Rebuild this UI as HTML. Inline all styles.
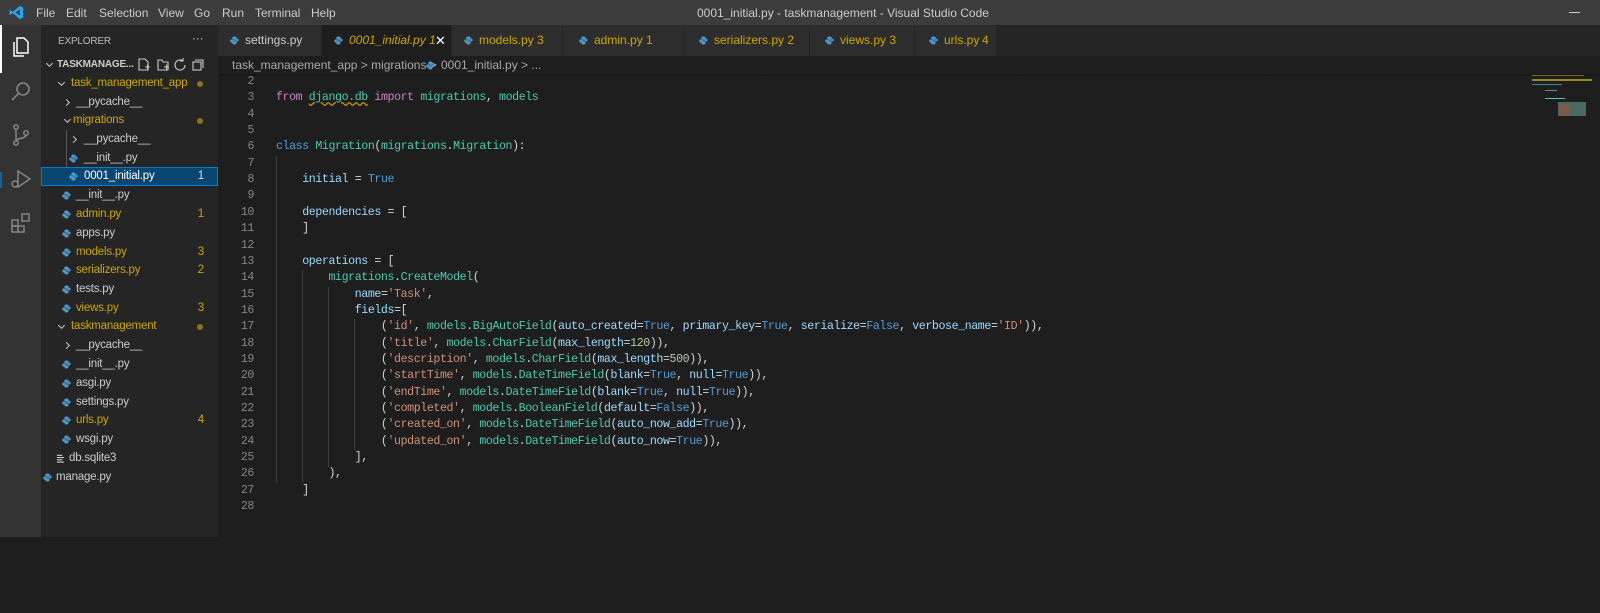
<!DOCTYPE html>
<html><head><meta charset="utf-8"><style>
*{margin:0;padding:0;box-sizing:border-box}
body{width:1600px;height:537px;background:#1e1e1e;overflow:hidden;position:relative;font-family:"Liberation Sans",sans-serif;color:#ccc}
.abs{position:absolute}
#title{left:0;top:0;width:1600px;height:25px;background:#3c3c3c;font-size:12px;color:#ccc}
#title span{position:absolute;top:6px}
#act{left:0;top:25px;width:41px;height:512px;background:#333}
#side{left:41px;top:25px;width:177px;height:512px;background:#252526;font-size:11.5px;letter-spacing:-0.2px}
.row{position:absolute;left:0;width:177px;height:19px;line-height:19px;white-space:nowrap}
.y{color:#cca700}
.w{color:#ccc}
.py{position:absolute;top:5px;width:9px;height:9px}
.chev{position:absolute;top:5px;width:9px;height:9px}
.dot{position:absolute;right:15px;top:7px;width:6px;height:6px;border-radius:3px;background:#8a7424}
.num{position:absolute;right:14px}
#tabs{left:218px;top:25px;width:1382px;height:31px;background:#252526}
.tab{position:absolute;top:0;height:31px;background:#2d2d2d;border-right:1px solid #252526;font-size:12px;line-height:31px;color:#cca700;white-space:nowrap;overflow:hidden}
#bc{left:218px;top:56px;width:1382px;height:18px;background:#1e1e1e;font-size:12px;color:#a9a9a9;line-height:18px;white-space:nowrap}
#code{left:218px;top:74px;font-family:"Liberation Mono",monospace;font-size:11.6px;letter-spacing:-0.4px;line-height:16.35px;white-space:pre;color:#d4d4d4}
.ln{position:absolute;left:0;width:36px;text-align:right;color:#858585}
.cl{position:absolute;left:58px}
.k{color:#c586c0}.b{color:#569cd6}.g{color:#4ec9b0}.v{color:#9cdcfe}.s{color:#ce9178}.n{color:#b5cea8}.f{color:#dcdcaa}
.guide{position:absolute;width:1px;background:#404040}
</style></head><body>
<svg width="0" height="0" style="position:absolute"><defs>
<symbol id="down" viewBox="0 0 10 10"><path d="M1.5 3.5 L5 7 L8.5 3.5" fill="none" stroke="#ccc" stroke-width="1.1"/></symbol>
<symbol id="right" viewBox="0 0 10 10"><path d="M3.5 1.5 L7 5 L3.5 8.5" fill="none" stroke="#ccc" stroke-width="1.1"/></symbol>
<symbol id="pyi" viewBox="0 0 10 10"><path d="M5 .5C3 .5 2.6 1.3 2.6 2.2V3.4H5.2V3.8H1.8C.9 3.8.3 4.5.3 5.5S.9 7.4 1.8 7.4H2.6V6.2C2.6 5.3 3.3 4.8 4.1 4.8H6C6.8 4.8 7.4 4.2 7.4 3.4V2.2C7.4 1.2 6.6.5 5 .5Z M4.8 9.5C6.8 9.5 7.2 8.7 7.2 7.8V6.6H4.6V6.2H8C8.9 6.2 9.6 5.5 9.6 4.5S8.9 2.6 8 2.6H7.6V3.8C7.6 4.7 6.9 5.2 6.1 5.2H4C3.2 5.2 2.6 5.8 2.6 6.6V7.8C2.6 8.8 3.2 9.5 4.8 9.5Z" fill="#4c9bd0"/></symbol>
</defs></svg>
<div id="title" class="abs">
<svg class="abs" style="left:9px;top:5px" width="15" height="15" viewBox="0 0 16 16"><path d="M11.5 1 L15 2.6 V13.4 L11.5 15 L4 8.7 L1.6 10.5 L0.5 10 V6 L1.6 5.5 L4 7.3 Z M11.5 4.5 L7 8 L11.5 11.5 Z" fill="#23a9f2"/></svg>
<span style="left:36px">File</span><span style="left:66px">Edit</span><span style="left:99px">Selection</span><span style="left:158px">View</span><span style="left:194px">Go</span><span style="left:222px">Run</span><span style="left:255px">Terminal</span><span style="left:311px">Help</span>
<span style="left:697px">0001_initial.py - taskmanagement - Visual Studio Code</span>
<div class="abs" style="left:1569px;top:12px;width:11px;height:1px;background:#ccc"></div>
</div>
<div id="act" class="abs">
<div class="abs" style="left:0;top:0;width:2px;height:48px;background:#fff"></div>
<svg class="abs" style="left:9px;top:10px" width="24" height="24" viewBox="0 0 24 24" fill="none" stroke="#fff" stroke-width="1.5"><path d="M8 3h7l4 4v11h-11z"/><path d="M5 7v14h10"/></svg>
<svg class="abs" style="left:9px;top:55px" width="24" height="24" viewBox="0 0 24 24" fill="none" stroke="#858585" stroke-width="1.6"><circle cx="14" cy="9" r="6"/><path d="M10 13l-7 7"/></svg>
<svg class="abs" style="left:9px;top:98px" width="24" height="24" viewBox="0 0 24 24" fill="none" stroke="#858585" stroke-width="1.5"><circle cx="7" cy="4" r="2.2"/><circle cx="7" cy="20" r="2.2"/><circle cx="17" cy="10" r="2.2"/><path d="M7 6v12M17 12c0 4-10 3-10 6"/></svg>
<svg class="abs" style="left:9px;top:142px" width="24" height="24" viewBox="0 0 24 24" fill="none" stroke="#858585" stroke-width="1.5"><path d="M9 4l12 8-12 8z"/><circle cx="6" cy="17" r="3"/></svg>
<svg class="abs" style="left:9px;top:186px" width="24" height="24" viewBox="0 0 24 24" fill="none" stroke="#858585" stroke-width="1.5"><rect x="3" y="9" width="6" height="6"/><rect x="3" y="15" width="6" height="6"/><rect x="9" y="15" width="6" height="6"/><rect x="13" y="3" width="7" height="7"/></svg>
</div>
<div id="side" class="abs">
<div class="abs" style="left:17px;top:11px;font-size:10px;color:#bbb">EXPLORER</div>
<div class="abs" style="left:151px;top:6px;font-size:12px;color:#ccc">···</div>
<div class="row" style="top:30px;font-weight:bold;font-size:10px"><svg class="chev" style="left:4px"><use href="#down"/></svg><span style="position:absolute;left:16px">TASKMANAGE...</span>
<svg class="abs" style="left:96px;top:3px" width="70" height="14" viewBox="0 0 70 14" fill="none" stroke="#ccc" stroke-width="1.1"><path d="M2 1h6l3 3v8H2z M8 9h5M10.5 6.5v5"/><path d="M21 2h4l1 2h5v8H21z M27 9h5M29.5 6.5v5"/><path d="M46 3a5 5 0 1 0 2 4M46 0v3h-3"/><rect x="56" y="4" width="8" height="8"/><path d="M58 2h8v8"/></svg></div>
<div class="row y" style="top:49px"><svg class="chev" style="left:16px"><use href="#down"/></svg><span style="position:absolute;left:30px">task_management_app</span><div class="dot"></div></div>
<div class="row w" style="top:68px"><svg class="chev" style="left:22px"><use href="#right"/></svg><span style="position:absolute;left:35px">__pycache__</span></div>
<div class="row y" style="top:86px"><svg class="chev" style="left:22px"><use href="#down"/></svg><span style="position:absolute;left:32px">migrations</span><div class="dot"></div></div>
<div class="abs" style="left:25px;top:105px;width:1px;height:56px;background:#585858"></div>
<div class="row w" style="top:105px"><svg class="chev" style="left:29px"><use href="#right"/></svg><span style="position:absolute;left:43px">__pycache__</span></div>
<div class="row w" style="top:124px"><svg class="py" style="left:28px"><use href="#pyi"/></svg><span style="position:absolute;left:43px">__init__.py</span></div>
<div class="row" style="top:142px;background:#094771;outline:1px solid #007fd4;outline-offset:-1px;color:#fff"><svg class="py" style="left:28px"><use href="#pyi"/></svg><span style="position:absolute;left:43px">0001_initial.py</span><span class="num" style="color:#ddd">1</span></div>
<div class="row w" style="top:161px"><svg class="py" style="left:21px"><use href="#pyi"/></svg><span style="position:absolute;left:35px">__init__.py</span></div>
<div class="row y" style="top:180px"><svg class="py" style="left:21px"><use href="#pyi"/></svg><span style="position:absolute;left:35px">admin.py</span><span class="num">1</span></div>
<div class="row w" style="top:199px"><svg class="py" style="left:21px"><use href="#pyi"/></svg><span style="position:absolute;left:35px">apps.py</span></div>
<div class="row y" style="top:218px"><svg class="py" style="left:21px"><use href="#pyi"/></svg><span style="position:absolute;left:35px">models.py</span><span class="num">3</span></div>
<div class="row y" style="top:236px"><svg class="py" style="left:21px"><use href="#pyi"/></svg><span style="position:absolute;left:35px">serializers.py</span><span class="num">2</span></div>
<div class="row w" style="top:255px"><svg class="py" style="left:21px"><use href="#pyi"/></svg><span style="position:absolute;left:35px">tests.py</span></div>
<div class="row y" style="top:274px"><svg class="py" style="left:21px"><use href="#pyi"/></svg><span style="position:absolute;left:35px">views.py</span><span class="num">3</span></div>
<div class="row y" style="top:292px"><svg class="chev" style="left:16px"><use href="#down"/></svg><span style="position:absolute;left:30px">taskmanagement</span><div class="dot"></div></div>
<div class="row w" style="top:311px"><svg class="chev" style="left:22px"><use href="#right"/></svg><span style="position:absolute;left:35px">__pycache__</span></div>
<div class="row w" style="top:330px"><svg class="py" style="left:21px"><use href="#pyi"/></svg><span style="position:absolute;left:35px">__init__.py</span></div>
<div class="row w" style="top:349px"><svg class="py" style="left:21px"><use href="#pyi"/></svg><span style="position:absolute;left:35px">asgi.py</span></div>
<div class="row w" style="top:368px"><svg class="py" style="left:21px"><use href="#pyi"/></svg><span style="position:absolute;left:35px">settings.py</span></div>
<div class="row y" style="top:386px"><svg class="py" style="left:21px"><use href="#pyi"/></svg><span style="position:absolute;left:35px">urls.py</span><span class="num">4</span></div>
<div class="row w" style="top:405px"><svg class="py" style="left:21px"><use href="#pyi"/></svg><span style="position:absolute;left:35px">wsgi.py</span></div>
<div class="row w" style="top:424px"><svg class="py" style="left:15px" viewBox="0 0 10 10"><path d="M1 1.5h6M1 4h8M1 6.5h6M1 9h8" stroke="#ccc" stroke-width="1.2"/></svg><span style="position:absolute;left:28px">db.sqlite3</span></div>
<div class="row w" style="top:443px"><svg class="py" style="left:2px"><use href="#pyi"/></svg><span style="position:absolute;left:15px">manage.py</span></div>
</div>
<div id="tabs" class="abs">
<div class="tab" style="left:0;width:104px;color:#ccc"><svg class="abs" style="left:12px;top:11px" width="9" height="9"><use href="#pyi"/></svg><span class="abs" style="left:27px">settings.py</span></div>
<div class="tab" style="left:104px;width:130px;background:#1e1e1e"><svg class="abs" style="left:12px;top:11px" width="9" height="9"><use href="#pyi"/></svg><span class="abs" style="left:27px;font-style:italic">0001_initial.py 1</span><span class="abs" style="left:113px;color:#fff;font-size:13px">✕</span></div>
<div class="tab" style="left:234px;width:111px"><svg class="abs" style="left:12px;top:11px" width="9" height="9"><use href="#pyi"/></svg><span class="abs" style="left:27px">models.py 3</span></div>
<div class="tab" style="left:345px;width:121px"><svg class="abs" style="left:16px;top:11px" width="9" height="9"><use href="#pyi"/></svg><span class="abs" style="left:31px">admin.py 1</span></div>
<div class="tab" style="left:466px;width:126px"><svg class="abs" style="left:15px;top:11px" width="9" height="9"><use href="#pyi"/></svg><span class="abs" style="left:30px">serializers.py 2</span></div>
<div class="tab" style="left:592px;width:105px"><svg class="abs" style="left:15px;top:11px" width="9" height="9"><use href="#pyi"/></svg><span class="abs" style="left:30px">views.py 3</span></div>
<div class="tab" style="left:697px;width:82px"><svg class="abs" style="left:14px;top:11px" width="9" height="9"><use href="#pyi"/></svg><span class="abs" style="left:29px">urls.py</span><span class="abs" style="left:67px">4</span></div>
</div>
<div id="bc" class="abs"><span class="abs" style="left:14px">task_management_app &gt; migrations &gt;</span><svg class="abs" style="left:208px;top:5px" width="9" height="9"><use href="#pyi"/></svg><span class="abs" style="left:223px">0001_initial.py &gt; ...</span></div>
<div class="abs" style="left:218px;top:74px;width:1382px;height:3px;background:linear-gradient(#161616,#1e1e1e)"></div>
<div class="abs" style="left:1532px;top:75px;width:52px;height:1px;background:#7a6a3a"></div>
<div class="abs" style="left:1532px;top:79px;width:60px;height:2px;background:#a08a20"></div>
<div class="abs" style="left:1532px;top:84px;width:30px;height:1px;background:#3f7f9f"></div>
<div class="abs" style="left:1545px;top:90px;width:12px;height:1px;background:#6a8aa0"></div>
<div class="abs" style="left:1545px;top:98px;width:20px;height:1px;background:#4ec9b0"></div>
<div class="abs" style="left:1558px;top:102px;width:28px;height:14px;background:#4a6a60"></div>
<div class="abs" style="left:1560px;top:104px;width:10px;height:12px;background:#7a5a4a"></div>
<div id="code" class="abs">
<div class="guide" style="left:58px;top:82px;height:327px"></div>
<div class="guide" style="left:84px;top:196px;height:212px"></div>
<div class="guide" style="left:110px;top:213px;height:180px"></div>
<div class="guide" style="left:136px;top:245px;height:131px"></div>
<div class="abs" style="left:-218px;top:98px;width:2px;height:16px;background:#0e639c"></div>
<div class="ln" style="top:0">2</div>
<div class="ln" style="top:16.35px">3</div><div class="cl" style="top:16.35px"><span class="k">from</span> <span class="g" style="text-decoration:underline wavy #cca700">django.db</span> <span class="k">import</span> <span class="g">migrations</span>, <span class="g">models</span></div>
<div class="ln" style="top:32.7px">4</div>
<div class="ln" style="top:49.05px">5</div>
<div class="ln" style="top:65.4px">6</div><div class="cl" style="top:65.4px"><span class="b">class</span> <span class="g">Migration</span>(<span class="g">migrations</span>.<span class="g">Migration</span>):</div>
<div class="ln" style="top:81.75px">7</div>
<div class="ln" style="top:98.1px">8</div><div class="cl" style="top:98.1px">    <span class="v">initial</span> = <span class="b">True</span></div>
<div class="ln" style="top:114.45px">9</div>
<div class="ln" style="top:130.8px">10</div><div class="cl" style="top:130.8px">    <span class="v">dependencies</span> = [</div>
<div class="ln" style="top:147.15px">11</div><div class="cl" style="top:147.15px">    ]</div>
<div class="ln" style="top:163.5px">12</div>
<div class="ln" style="top:179.85px">13</div><div class="cl" style="top:179.85px">    <span class="v">operations</span> = [</div>
<div class="ln" style="top:196.2px">14</div><div class="cl" style="top:196.2px">        <span class="g">migrations</span>.<span class="g">CreateModel</span>(</div>
<div class="ln" style="top:212.55px">15</div><div class="cl" style="top:212.55px">            <span class="v">name</span>=<span class="s">'Task'</span>,</div>
<div class="ln" style="top:228.9px">16</div><div class="cl" style="top:228.9px">            <span class="v">fields</span>=[</div>
<div class="ln" style="top:245.25px">17</div><div class="cl" style="top:245.25px">                (<span class="s">'id'</span>, <span class="g">models</span>.<span class="g">BigAutoField</span>(<span class="v">auto_created</span>=<span class="b">True</span>, <span class="v">primary_key</span>=<span class="b">True</span>, <span class="v">serialize</span>=<span class="b">False</span>, <span class="v">verbose_name</span>=<span class="s">'ID'</span>)),</div>
<div class="ln" style="top:261.6px">18</div><div class="cl" style="top:261.6px">                (<span class="s">'title'</span>, <span class="g">models</span>.<span class="g">CharField</span>(<span class="v">max_length</span>=<span class="n">120</span>)),</div>
<div class="ln" style="top:277.95px">19</div><div class="cl" style="top:277.95px">                (<span class="s">'description'</span>, <span class="g">models</span>.<span class="g">CharField</span>(<span class="v">max_length</span>=<span class="n">500</span>)),</div>
<div class="ln" style="top:294.3px">20</div><div class="cl" style="top:294.3px">                (<span class="s">'startTime'</span>, <span class="g">models</span>.<span class="g">DateTimeField</span>(<span class="v">blank</span>=<span class="b">True</span>, <span class="v">null</span>=<span class="b">True</span>)),</div>
<div class="ln" style="top:310.65px">21</div><div class="cl" style="top:310.65px">                (<span class="s">'endTime'</span>, <span class="g">models</span>.<span class="g">DateTimeField</span>(<span class="v">blank</span>=<span class="b">True</span>, <span class="v">null</span>=<span class="b">True</span>)),</div>
<div class="ln" style="top:327px">22</div><div class="cl" style="top:327px">                (<span class="s">'completed'</span>, <span class="g">models</span>.<span class="g">BooleanField</span>(<span class="v">default</span>=<span class="b">False</span>)),</div>
<div class="ln" style="top:343.35px">23</div><div class="cl" style="top:343.35px">                (<span class="s">'created_on'</span>, <span class="g">models</span>.<span class="g">DateTimeField</span>(<span class="v">auto_now_add</span>=<span class="b">True</span>)),</div>
<div class="ln" style="top:359.7px">24</div><div class="cl" style="top:359.7px">                (<span class="s">'updated_on'</span>, <span class="g">models</span>.<span class="g">DateTimeField</span>(<span class="v">auto_now</span>=<span class="b">True</span>)),</div>
<div class="ln" style="top:376.05px">25</div><div class="cl" style="top:376.05px">            ],</div>
<div class="ln" style="top:392.4px">26</div><div class="cl" style="top:392.4px">        ),</div>
<div class="ln" style="top:408.75px">27</div><div class="cl" style="top:408.75px">    ]</div>
<div class="ln" style="top:425.1px">28</div>
</div>
</body></html>
